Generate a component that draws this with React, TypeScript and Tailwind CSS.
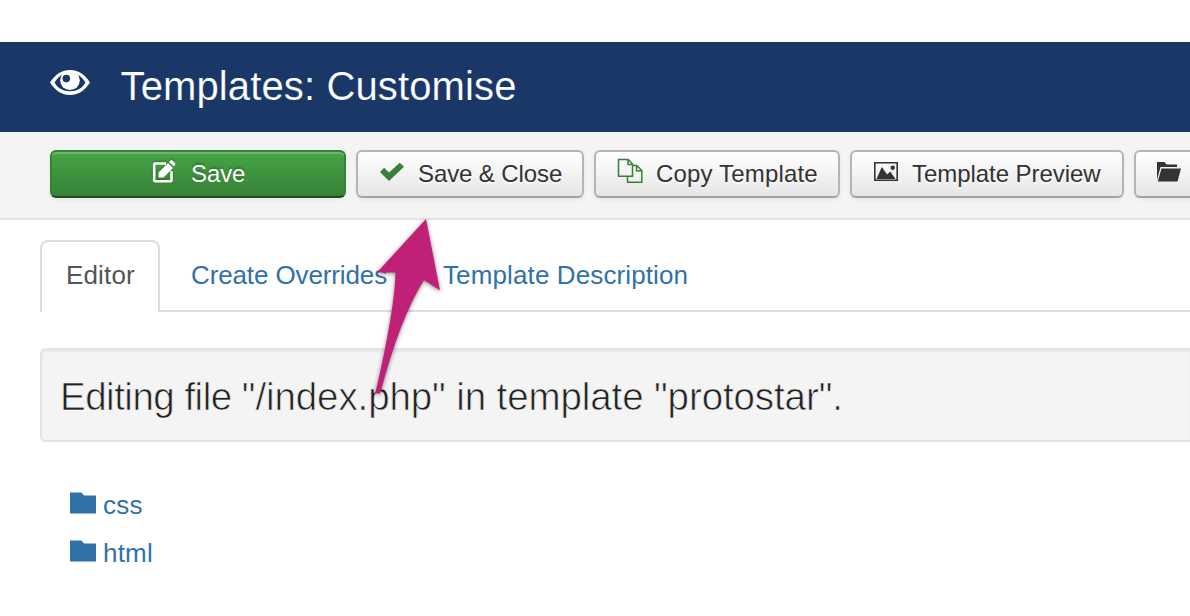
import type { ReactNode } from "react";

function EyeIcon() {
  return (
    <svg viewBox="0 0 40 26" className="h-[26px] w-10 shrink-0">
      <path d="M0 12.500C5.500 4 12 0 20 0s14.500 4 20 12.500C34.500 21 28 25 20 25S5.500 21 0 12.500Z" fill="#fff" />
      <path d="M4.500 12.500C7.500 8 10 5.500 13 4.500h14c3 1 5.500 3.500 8.500 8C32 18.500 27 21.200 20 21.200S8 18.500 4.500 12.500Z" fill="#1a3867" />
      <circle cx="20" cy="10.200" r="9.800" fill="#fff" />
      <circle cx="16.300" cy="8.600" r="3.800" fill="#1a3867" />
    </svg>
  );
}

function EditIcon() {
  return (
    <svg viewBox="0 0 24 24" className="h-6 w-6 shrink-0 drop-shadow-[0_-1px_1px_rgba(0,0,0,0.3)]">
      <path d="M14 3.500H3Q2.200 3.500 2.200 4.300v16.200q0 .8.800.8h15.700q.8 0 .8-.8V11" fill="none" stroke="#fff" strokeWidth="2.600" />
      <path d="M6.500 17.500v-5L16 3l5 5-9.500 9.500ZM17 2l1.500-1.500q1-.8 2 0l2.500 2.500q.8 1 0 2L21.800 6.500Z" fill="#fff" />
    </svg>
  );
}

function CheckIcon() {
  return (
    <svg viewBox="0 0 24 20" className="h-5 w-6 shrink-0">
      <path d="m0 10 4.200-4.200L9 10.500 19.700.7 24 4.800 9 19Z" fill="#378137" />
    </svg>
  );
}

function CopyIcon() {
  return (
    <svg viewBox="0 0 26 26" className="h-[26px] w-[26px] shrink-0" fill="none" stroke="#378137" strokeWidth="1.500">
      <path d="M10.500 18.300v5.900h14.300V12.500l-5-5h-4.300M19.500 7.500v5.200h5" />
      <path d="M1.500 1.500h9.700l4.300 4.500v12.300h-14ZM11 2v4.500h4.500" />
    </svg>
  );
}

function PictureIcon() {
  return (
    <svg viewBox="0 0 24 19" className="h-[19px] w-6 shrink-0">
      <path d="M.8.800h22.400v17.400H.8Z" fill="none" stroke="#333" strokeWidth="1.600" />
      <path d="M2.500 17 7.800 5l5.400 7.500 3-3L21.500 17Z" fill="#333" />
      <circle cx="18.700" cy="5.700" r="2.200" fill="#333" />
    </svg>
  );
}

function OpenFolderIcon() {
  return (
    <svg viewBox="0 0 24 20" className="h-5 w-6 shrink-0" fill="#333">
      <path d="M0 18V0h7.500l2 2.500H20V5H3.500Z" />
      <path d="M4.500 6.500H24L20.500 19.500H.8Z" />
    </svg>
  );
}

function FolderIcon() {
  return (
    <svg viewBox="0 0 26 22" className="h-[22px] w-[26px] shrink-0">
      <path d="M0 .5h11.500L14 3.500h12V21.500H0Z" fill="#3071a9" />
    </svg>
  );
}

function ToolButton({ className, children }: { className: string; children?: ReactNode }) {
  return (
    <button
      type="button"
      className={
        "flex h-12 shrink-0 items-start rounded-md border-2 border-[#b5b5b5] border-b-[#a2a2a2] bg-linear-to-b from-white to-[#e6e6e6] text-[#333] shadow-[0_2px_4px_rgba(0,0,0,0.05)] [text-shadow:0_2px_2px_rgba(255,255,255,0.75)] " +
        className
      }
    >
      {children}
    </button>
  );
}

export default function App() {
  return (
    <div className="relative h-[616px] w-full overflow-hidden bg-white pt-[42px] font-['Liberation_Sans',Arial,sans-serif]">
      <header className="flex h-[90px] bg-[#1a3867] pl-[50px] text-white">
        <div className="pt-7">
          <EyeIcon />
        </div>
        <h1 className="ml-[30.500px] whitespace-nowrap pt-[21px] text-[40px] leading-[46px] tracking-[0.13px] [-webkit-text-stroke:0.2px_#1a3867]">
          Templates: Customise
        </h1>
      </header>

      <div className="flex h-[88px] gap-2.5 overflow-hidden border-b-2 border-[#e3e3e3] bg-[#f4f4f4] pt-[18px] pl-[50px] text-2xl leading-[28px]">
        <button
          type="button"
          className="flex h-12 w-[296px] shrink-0 items-start rounded-md border-2 border-[#378137] border-b-[#204b20] bg-linear-to-b from-[#46a546] to-[#378137] pl-[100px] text-white shadow-[inset_0_2px_0_rgba(255,255,255,0.2),0_2px_4px_rgba(0,0,0,0.05)] [text-shadow:0_-2px_2px_rgba(0,0,0,0.25)]"
        >
          <span className="pt-2"><EditIcon /></span>
          <span className="ml-[15px] pt-2 tracking-[-0.1px]">Save</span>
        </button>
        <ToolButton className="w-[228px] pl-[22px]">
          <span className="pt-[10px]"><CheckIcon /></span>
          <span className="ml-[14px] whitespace-nowrap pt-2 tracking-[-0.1px]">Save &amp; Close</span>
        </ToolButton>
        <ToolButton className="w-[246px] pl-[21px]">
          <span className="pt-[6px]"><CopyIcon /></span>
          <span className="ml-[13px] whitespace-nowrap pt-2 tracking-[0.16px]">Copy Template</span>
        </ToolButton>
        <ToolButton className="w-[274px] pl-[22px]">
          <span className="pt-[10px]"><PictureIcon /></span>
          <span className="ml-[14px] whitespace-nowrap pt-2 tracking-[-0.05px]">Template Preview</span>
        </ToolButton>
        <ToolButton className="w-[240px] pl-[21px]">
          <span className="pt-[10px]"><OpenFolderIcon /></span>
        </ToolButton>
      </div>

      <nav className="mt-5 ml-10 flex h-[72px] text-[26px] leading-[30px] text-[#3071a9]">
        <a className="h-[72px] w-[120px] rounded-t-lg border-2 border-b-0 border-[#ddd] pt-[18px] pl-6 tracking-[0.15px] text-[#555]">Editor</a>
        <div className="flex flex-1 border-b-2 border-[#ddd] pt-5 whitespace-nowrap">
          <a className="ml-[31px] w-[252px] tracking-[-0.12px]">Create Overrides</a>
          <a className="tracking-[0.12px]">Template Description</a>
        </div>
      </nav>

      <main className="pl-10">
        <div className="mt-9 h-[94px] rounded-l-md border-2 border-r-0 border-[#e3e3e3] bg-[#f4f4f4] pl-[18px] shadow-[inset_0_2px_2px_rgba(0,0,0,0.05)]">
          <h2 className="whitespace-pre pt-6 text-[38.500px] leading-[46px] text-[#222] [-webkit-text-stroke:0.7px_#f4f4f4]">
            <span className="tracking-[-0.5px]">{"Editing file "}</span>
            <span className="tracking-[-0.1px]">{"\"/index.php\" in template \"protostar\"."}</span>
          </h2>
        </div>
        <ul className="mt-[39px] pl-[30px] text-[26px] leading-[48px] tracking-[0.2px] text-[#3071a9]">
          <li className="flex h-12 items-start gap-[7px]">
            <span className="pt-[11px]"><FolderIcon /></span>
            <span>css</span>
          </li>
          <li className="flex h-12 items-start gap-[7px]">
            <span className="pt-[11px]"><FolderIcon /></span>
            <span>html</span>
          </li>
        </ul>
      </main>

      <svg
        viewBox="0 0 80 190"
        className="pointer-events-none absolute top-[214px] left-[368px] h-[190px] w-20 drop-shadow-[0_1px_2px_rgba(0,0,0,0.5)]"
      >
        <path d="M58 5 72 76.500 56 66Q32 104 12.500 178.500Q10 181 7.500 178.500Q27 94 27.500 58.500L9 58.500Z" fill="#c02078" />
      </svg>
    </div>
  );
}
